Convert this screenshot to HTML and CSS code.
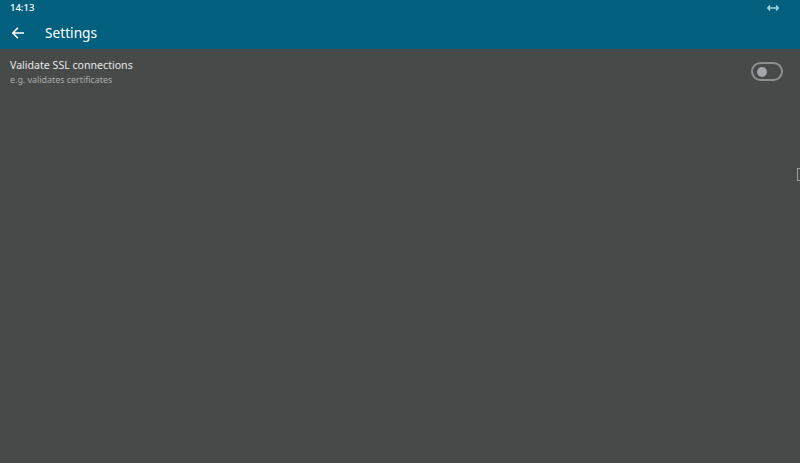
FILE: index.html
```html
<!DOCTYPE html>
<html>
<head>
<meta charset="utf-8">
<link rel="stylesheet" href="styles.css">
</head>
<body>
<div class="app">
  <header class="topbar">
    <div class="status">
      <span class="time">14:13</span>
      <svg class="status-icon" width="12" height="8" viewBox="0 0 12 8">
        <path d="M1 4h10M3 1.5L0.8 4 3 6.5M9 1.5L11.2 4 9 6.5" fill="none" stroke="#a8d4e0" stroke-width="1.4"/>
      </svg>
    </div>
    <div class="titlebar">
      <svg class="back" width="14" height="14" viewBox="0 0 14 14">
        <path d="M13 7H2M7 1.8L1.8 7 7 12.2" fill="none" stroke="#ffffff" stroke-width="1.6"/>
      </svg>
      <span class="title">Settings</span>
    </div>
  </header>
  <main class="content">
    <div class="row">
      <div class="texts">
        <div class="label">Validate SSL connections</div>
        <div class="sub">e.g. validates certificates</div>
      </div>
      <div class="switch"><div class="knob"></div></div>
    </div>
  </main>
  <div class="edge-mark"></div>
</div>
</body>
</html>
```
FILE: styles.css
```css
html, body {
  margin: 0;
  padding: 0;
  width: 800px;
  height: 463px;
  overflow: hidden;
}
body {
  font-family: "Noto Sans", "Open Sans", sans-serif;
  background: #464b4a;
}
.app {
  position: relative;
  width: 800px;
  height: 463px;
  display: flex;
  flex-direction: column;
}
.topbar {
  background: #02607e;
  height: 49px;
  display: flex;
  flex-direction: column;
}
.status {
  height: 16px;
  display: flex;
  align-items: center;
  justify-content: space-between;
  padding: 0 21px 0 10px;
}
.time {
  color: #ffffff;
  font-size: 9.5px;
  font-weight: 500;
  line-height: 16px;
}
.status-icon {
  display: block;
  margin-bottom: 1px;
}
.titlebar {
  flex: 1;
  display: flex;
  align-items: center;
  padding-left: 11px;
}
.back {
  display: block;
}
.title {
  color: #ffffff;
  font-size: 13.7px;
  margin-left: 20px;
  line-height: 18px;
}
.content {
  flex: 1;
}
.row {
  display: flex;
  align-items: center;
  justify-content: space-between;
  padding: 9px 17px 0 10px;
}
.texts {
  display: flex;
  flex-direction: column;
}
.label {
  color: #e8e8e8;
  font-size: 10.6px;
  line-height: 15px;
}
.sub {
  color: #a7abab;
  font-size: 8.9px;
  line-height: 13px;
}
.switch {
  width: 24px;
  height: 15px;
  border: 2px solid #8b908f;
  border-radius: 10px;
  display: flex;
  align-items: center;
  padding-left: 4px;
  box-sizing: content-box;
  margin-top: -1px;
}
.knob {
  width: 10px;
  height: 10px;
  border-radius: 50%;
  background: #a2a5a9;
}
.edge-mark {
  position: absolute;
  right: 0;
  top: 168px;
  width: 2px;
  height: 11px;
  border: 1px solid #9aa0a0;
  border-right: none;
}
```
